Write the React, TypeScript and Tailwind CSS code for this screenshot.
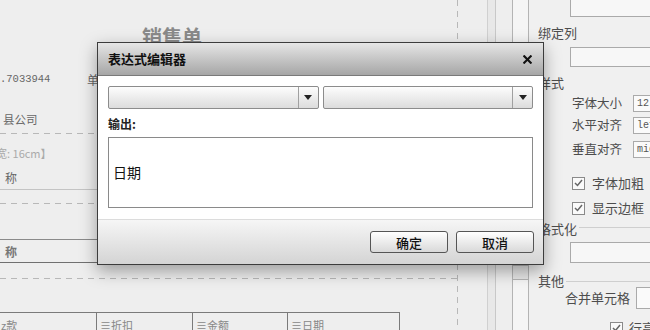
import React from "react";

function Select() {
  return (
    <div className="flex-1 h-[23px] flex border border-[#8c8c8c] rounded-[2px] bg-linear-to-b from-[#fdfdfd] to-[#dcdcdc]">
      <div className="flex-1" />
      <div className="w-[20px] border-l border-[#a0a0a0] flex items-center justify-center">
        <svg width="8" height="5" viewBox="0 0 8 5">
          <path d="M0 0H8L4 5Z" fill="#222" />
        </svg>
      </div>
    </div>
  );
}

function Check() {
  return (
    <div className="w-[13px] h-[13px] shrink-0 border border-[#8a8a8a] bg-[#fafafa] flex items-center justify-center">
      <svg width="9" height="8" viewBox="0 0 9 8">
        <path d="M1 4L3.5 6.5L8 1" stroke="#666" strokeWidth="1.5" fill="none" />
      </svg>
    </div>
  );
}

export default function App() {
  return (
    <div className="relative w-[650px] h-[330px] overflow-hidden bg-[#eeeeee] flex font-['Noto_Sans_CJK_SC',sans-serif]">
      {/* report canvas */}
      <div className="w-[457px] shrink-0 flex flex-col text-[#666]">
        <div className="h-[70px] shrink-0 pl-[142px] pt-[25px] text-[20px] leading-[24px] font-bold text-[#8a8a8a]">销售单</div>
        <div className="h-[20px] shrink-0 flex items-center">
          <span className="w-[87px] font-['Liberation_Mono',monospace] text-[10.5px]">.7033944</span>
          <span className="text-[12px]">单</span>
        </div>
        <div className="h-[20px] shrink-0" />
        <div className="h-[20px] shrink-0 flex items-center pl-[3px] text-[11.5px]">县公司</div>
        <div className="h-[3px] shrink-0" />
        <div className="h-px shrink-0 bg-[repeating-linear-gradient(90deg,#b8b8b8_0_6px,transparent_6px_11px)]" />
        <div className="h-[11px] shrink-0" />
        <div className="h-[16px] shrink-0 flex items-center -ml-[4px] text-[11px] text-[#aaa]">宽: 16cm】</div>
        <div className="h-[9px] shrink-0" />
        <div className="h-[16px] shrink-0 flex items-center pl-[5px] text-[12px]">称</div>
        <div className="h-[3px] shrink-0" />
        <div className="h-px shrink-0 bg-[#c4c4c4]" />
        <div className="h-[13px] shrink-0" />
        <div className="h-px shrink-0 bg-[repeating-linear-gradient(90deg,#b8b8b8_0_6px,transparent_6px_11px)]" />
        <div className="h-[35px] shrink-0" />
        <div className="h-px shrink-0 bg-[#8a8a8a]" />
        <div className="h-[4px] shrink-0" />
        <div className="h-[16px] shrink-0 flex items-center pl-[5px] text-[12px] font-bold text-[#777]">称</div>
        <div className="h-[2px] shrink-0" />
        <div className="h-px shrink-0 bg-[#707070]" />
        <div className="h-[15px] shrink-0" />
        <div className="h-px shrink-0 bg-[repeating-linear-gradient(90deg,#b8b8b8_0_6px,transparent_6px_11px)]" />
        <div className="h-[33px] shrink-0" />
        <div className="h-px shrink-0 w-[400px] bg-[#7a7a7a]" />
        <div className="flex h-[17px] shrink-0 w-[400px] text-[11px] text-[#888]">
          <div className="w-[97px] border-r border-[#7a7a7a] pt-[4px] pl-[1px]">z款</div>
          <div className="w-[96px] border-r border-[#7a7a7a] pt-[4px] pl-[3px]">≡折扣</div>
          <div className="w-[95px] border-r border-[#7a7a7a] pt-[4px] pl-[3px]">≡金额</div>
          <div className="w-[112px] border-r border-[#7a7a7a] pt-[4px] pl-[3px]">≡日期</div>
        </div>
      </div>

      {/* page edge and gutters */}
      <div className="w-px shrink-0 bg-[repeating-linear-gradient(180deg,#b8b8b8_0_6px,transparent_6px_11px)]" />
      <div className="w-[29px] shrink-0" />
      <div className="w-px shrink-0 bg-[#d0d0d0]" />
      <div className="w-[7px] shrink-0 bg-[#e8e8e8]" />
      <div className="w-px shrink-0 bg-[#c8c8c8]" />
      <div className="w-[16px] shrink-0" />
      <div className="w-[17px] shrink-0 border-x border-[#b4b4b4] bg-[#f5f5f5] flex flex-col">
        <div className="h-[265px] shrink-0" />
        <div className="h-[15px] shrink-0 border-y border-[#b4b4b4] bg-[#e6e6e6]" />
      </div>

      {/* property panel */}
      <div className="w-[121px] shrink-0 flex flex-col text-[#4d4d4d] overflow-hidden bg-[#f0f0f0]">
        <div className="ml-[41px] h-[17px] w-[90px] shrink-0 border-x border-b border-[#aaa] bg-[#f7f7f7]" />
        <div className="mt-[8px] h-[16px] shrink-0 pl-[9px] flex items-center text-[13px]">绑定列</div>
        <div className="mt-[6px] ml-[41px] h-[20px] w-[90px] shrink-0 border border-[#aaa] bg-[#f7f7f7]" />
        <div className="mt-[8px] h-[16px] shrink-0 pl-[9px] flex items-center text-[13px]">样式</div>
        <div className="mt-[3px] h-[18px] shrink-0 flex items-center">
          <span className="pl-[43px] w-[104px] shrink-0 text-[12.5px] whitespace-nowrap">字体大小</span>
          <div className="h-[17px] w-[30px] shrink-0 border border-[#aaa] bg-[#fafafa] pl-[3px] flex items-center font-['Liberation_Mono',monospace] text-[10px] text-[#555]">12</div>
        </div>
        <div className="mt-[4px] h-[18px] shrink-0 flex items-center">
          <span className="pl-[43px] w-[104px] shrink-0 text-[12.5px] whitespace-nowrap">水平对齐</span>
          <div className="h-[17px] w-[30px] shrink-0 border border-[#aaa] bg-[#fafafa] pl-[3px] flex items-center font-['Liberation_Mono',monospace] text-[10px] text-[#555]">left</div>
        </div>
        <div className="mt-[6px] h-[18px] shrink-0 flex items-center">
          <span className="pl-[43px] w-[104px] shrink-0 text-[12.5px] whitespace-nowrap">垂直对齐</span>
          <div className="h-[17px] w-[30px] shrink-0 border border-[#aaa] bg-[#fafafa] pl-[3px] flex items-center font-['Liberation_Mono',monospace] text-[10px] text-[#555]">middle</div>
        </div>
        <div className="mt-[16px] h-[18px] shrink-0 flex items-center pl-[43px] gap-[7px]">
          <Check />
          <span className="text-[13px] whitespace-nowrap">字体加粗</span>
        </div>
        <div className="mt-[7px] h-[18px] shrink-0 flex items-center pl-[43px] gap-[7px]">
          <Check />
          <span className="text-[13px] whitespace-nowrap">显示边框</span>
        </div>
        <div className="mt-[4px] h-[16px] shrink-0 flex items-center pl-[9px] text-[13px]">
          <span>格式化</span>
          <div className="flex-1 h-px bg-[#cfcfcf] ml-[2px] -mt-[3px]" />
        </div>
        <div className="mt-[5px] ml-[41px] h-[21px] w-[90px] shrink-0 border border-[#aaa] bg-[#f7f7f7]" />
        <div className="mt-[10px] h-[16px] shrink-0 flex items-center pl-[9px] text-[13px]">
          <span>其他</span>
          <div className="flex-1 h-px bg-[#cfcfcf] ml-[2px]" />
        </div>
        <div className="h-[18px] shrink-0 flex items-center">
          <span className="pl-[36px] w-[107px] shrink-0 text-[13px] whitespace-nowrap">合并单元格</span>
          <div className="h-[22px] w-[30px] shrink-0 border border-[#aaa] bg-[#fafafa]" />
        </div>
        <div className="mt-[13px] h-[16px] shrink-0 flex items-center pl-[81px] gap-[6px]">
          <Check />
          <span className="text-[13px] whitespace-nowrap">行高</span>
        </div>
      </div>

      {/* dialog */}
      <div className="absolute left-[97px] top-[42px] w-[447px] h-[223px] border border-[#3c3c3c] shadow-[0_6px_16px_rgba(0,0,0,0.35)] flex flex-col bg-white">
        <div className="h-[33px] shrink-0 flex items-center justify-between pl-[10px] pr-[11px] bg-linear-to-b from-[#e6e6e6] to-[#a6a6a6] border-b border-[#7a7a7a]">
          <span className="text-[13px] font-bold text-[#111]">表达式编辑器</span>
          <svg width="9" height="9" viewBox="0 0 9 9">
            <path d="M1.3 1.3L7.7 7.7M7.7 1.3L1.3 7.7" stroke="#111" strokeWidth="2.1" strokeLinecap="square" />
          </svg>
        </div>
        <div className="flex-1 px-[10px] pt-[10px] flex flex-col">
          <div className="flex gap-[4px]">
            <Select />
            <Select />
          </div>
          <div className="mt-[7px] text-[12px] leading-[16px] font-bold text-[#222]">输出:</div>
          <div className="mt-[5px] h-[71px] shrink-0 border border-[#8a8a8a] flex items-center px-[4px] text-[14px] text-[#111]">日期</div>
        </div>
        <div className="h-[45px] shrink-0 border-t border-[#dcdcdc] bg-linear-to-b from-[#f6f6f6] to-[#d4d4d4] flex justify-end items-start pt-[11px] pr-[9px] gap-[8px]">
          <button className="w-[78px] h-[22px] rounded-[3px] border border-[#555] bg-linear-to-b from-[#ffffff] to-[#d9d9d9] text-[13px] text-[#111] font-medium leading-none">确定</button>
          <button className="w-[78px] h-[22px] rounded-[3px] border border-[#555] bg-linear-to-b from-[#ffffff] to-[#d9d9d9] text-[13px] text-[#111] font-medium leading-none">取消</button>
        </div>
      </div>
    </div>
  );
}
